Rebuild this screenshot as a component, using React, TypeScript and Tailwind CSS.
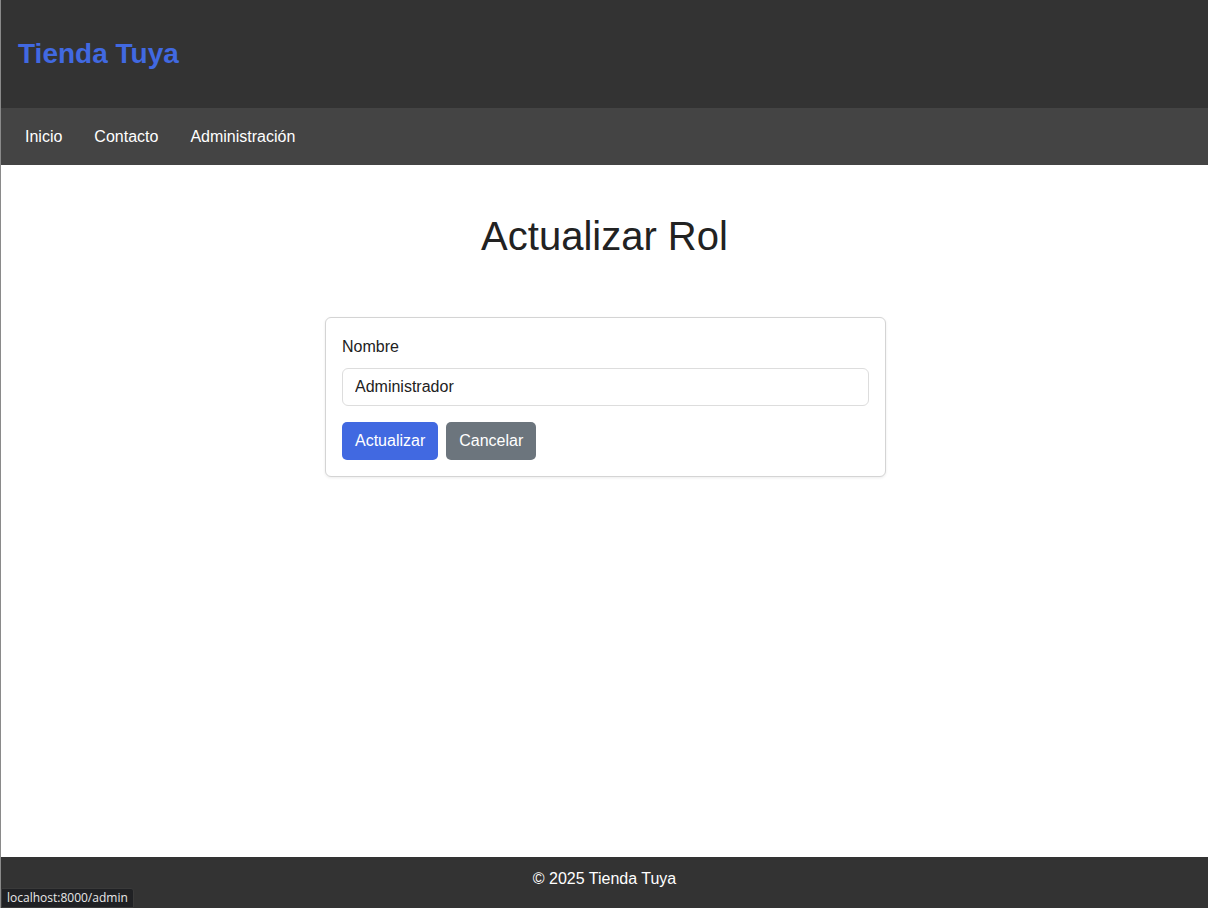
export default function App() {
  return (
    <div className="relative flex min-h-[908px] flex-col border-l border-[#8a8a8a] bg-white font-['Liberation_Sans',Arial,sans-serif]">
      <header className="flex h-[108px] items-center bg-[#333333] pl-[17px]">
        <h1 className="text-[28px] font-bold text-[#4169e1]">Tienda Tuya</h1>
      </header>

      <nav className="flex h-[57px] items-center gap-8 bg-[#444444] px-6 text-base text-white">
        <a href="#">Inicio</a>
        <a href="#">Contacto</a>
        <a href="#">Administración</a>
      </nav>

      <main className="flex flex-1 flex-col items-center pt-[48px]">
        <h2 className="text-[40px] leading-[46px] text-[#222222]">Actualizar Rol</h2>

        <form className="ml-[2px] mt-[58px] w-[561px] rounded-md border border-[#d4d4d4] bg-white p-4 shadow-[0_1px_3px_rgba(0,0,0,0.08)]">
          <label className="block pt-[1px] text-base text-[#222222]">Nombre</label>
          <input
            defaultValue="Administrador"
            className="mt-[9px] h-[38px] w-full rounded-md border border-[#dddddd] px-3 text-base text-[#222222] outline-none"
          />
          <div className="mt-4 flex gap-2">
            <button type="button" className="h-[38px] rounded-[5px] bg-[#4169e1] px-[13px] text-base text-white">
              Actualizar
            </button>
            <button type="button" className="h-[38px] rounded-[5px] bg-[#6c757d] px-[13px] text-base text-white">
              Cancelar
            </button>
          </div>
        </form>
      </main>

      <footer className="flex h-[51px] items-start justify-center bg-[#333333] pt-[10px] text-base leading-6 text-white">
        © 2025 Tienda Tuya
      </footer>

      <div className="absolute bottom-0 left-0 rounded-tr-[3px] border border-[#3a3a3a] bg-[#202124] px-[5px] py-[2px] font-['Open_Sans',sans-serif] text-[12px] leading-[14px] text-[#e8e8e8]">
        localhost:8000/admin
      </div>
    </div>
  );
}
